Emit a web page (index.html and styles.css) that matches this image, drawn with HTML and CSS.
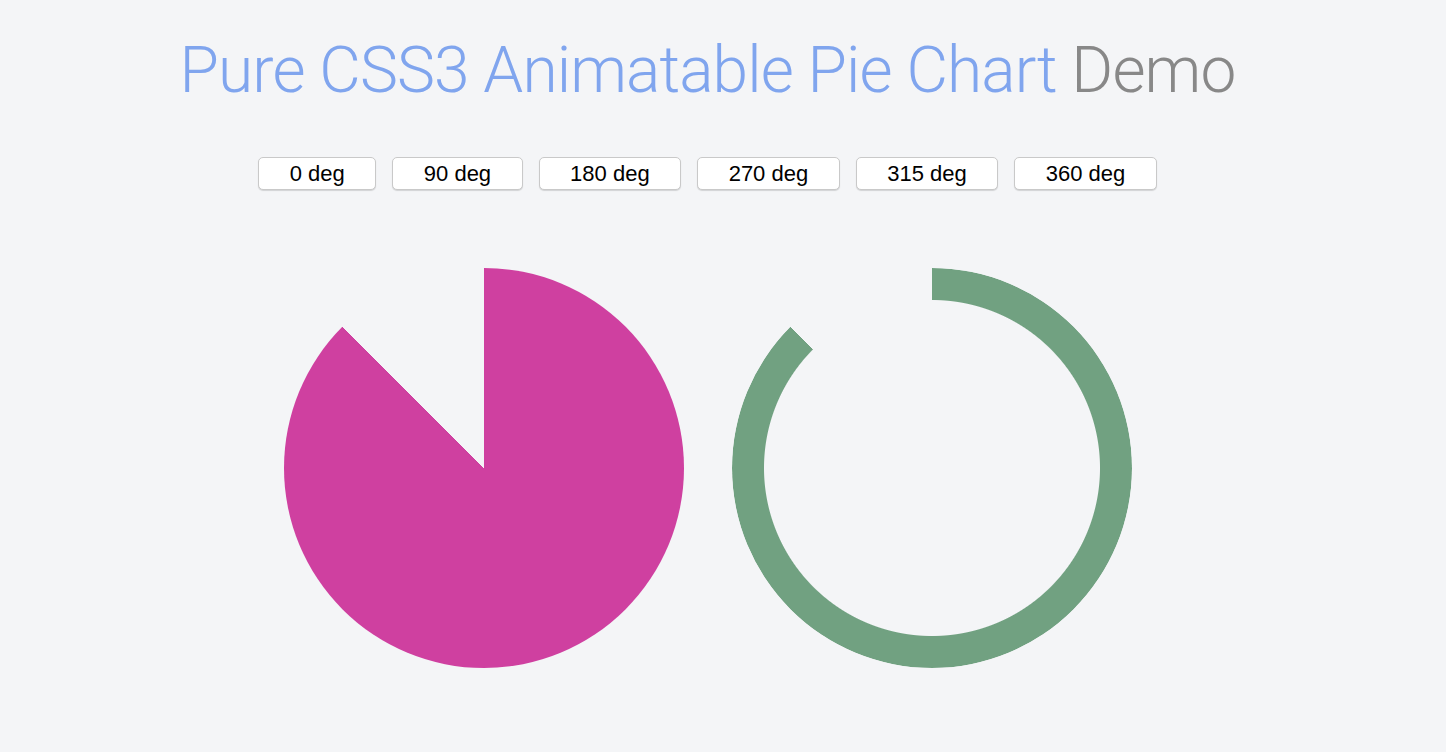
FILE: index.html
```html
<!DOCTYPE html>
<html>
<head>
<meta charset="utf-8">
<title>Pure CSS3 Animatable Pie Chart Demo</title>
<link rel="stylesheet" href="styles.css">
</head>
<body>
<main class="page">
  <h1 class="title">Pure CSS3 Animatable Pie Chart <span class="title-demo">Demo</span></h1>
  <div class="controls">
    <button class="btn">0 deg</button>
    <button class="btn">90 deg</button>
    <button class="btn">180 deg</button>
    <button class="btn">270 deg</button>
    <button class="btn">315 deg</button>
    <button class="btn">360 deg</button>
  </div>
  <div class="charts">
    <div class="pie pie-solid"></div>
    <div class="pie pie-ring"></div>
  </div>
</main>
</body>
</html>
```
FILE: styles.css
```css
html, body {
  margin: 0;
  padding: 0;
  background: #f4f5f7;
}

.page {
  width: 1415px;
  display: flex;
  flex-direction: column;
  align-items: center;
}

.title {
  margin: 31px 0 0;
  font-family: Roboto, "Liberation Sans", sans-serif;
  font-weight: 300;
  font-size: 64px;
  letter-spacing: -0.9px;
  line-height: 80px;
  color: #80a5ee;
  white-space: nowrap;
}

.title-demo {
  color: #888888;
}

.controls {
  display: flex;
  gap: 16px;
  margin-top: 46px;
}

.btn {
  height: 33px;
  padding: 1px 30.5px 0;
  border: 1px solid #c9c9c9;
  border-radius: 5px;
  background: #ffffff;
  box-shadow: 0 1px 1px rgba(0, 0, 0, 0.14);
  font-family: "Liberation Sans", Arial, sans-serif;
  font-size: 22px;
  color: #000;
}

.charts {
  display: flex;
  gap: 48px;
  margin-top: 78px;
}

.pie {
  width: 400px;
  height: 400px;
  border-radius: 50%;
}

.pie-solid {
  background: conic-gradient(#cf40a0 0deg 315deg, transparent 315deg 360deg);
}

.pie-ring {
  background: conic-gradient(#71a181 0deg 315deg, transparent 315deg 360deg);
  -webkit-mask: radial-gradient(circle, transparent 167.5px, #000 168.5px);
  mask: radial-gradient(circle, transparent 167.5px, #000 168.5px);
}
```
